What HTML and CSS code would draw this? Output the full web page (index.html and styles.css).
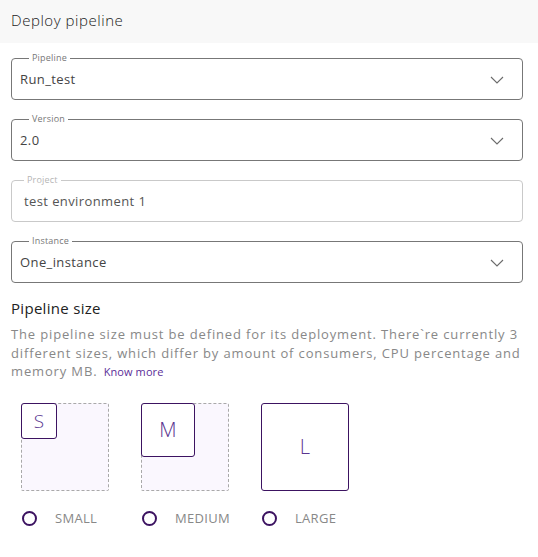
FILE: index.html
```html
<!DOCTYPE html>
<html lang="en">
<head>
<meta charset="utf-8">
<title>Deploy pipeline</title>
<link rel="stylesheet" href="styles.css">
</head>
<body>
<div class="panel">
  <header class="header">Deploy pipeline</header>
  <div class="form">
    <fieldset class="field">
      <legend class="field-label">Pipeline</legend>
      <div class="field-row">
        <span class="field-value">Run_test</span>
        <svg class="chevron" width="14" height="8" viewBox="0 0 14 8"><path d="M1 1 L7 7 L13 1" fill="none" stroke="#6b6b6b" stroke-width="1.1"/></svg>
      </div>
    </fieldset>
    <fieldset class="field">
      <legend class="field-label">Version</legend>
      <div class="field-row">
        <span class="field-value">2.0</span>
        <svg class="chevron" width="14" height="8" viewBox="0 0 14 8"><path d="M1 1 L7 7 L13 1" fill="none" stroke="#6b6b6b" stroke-width="1.1"/></svg>
      </div>
    </fieldset>
    <fieldset class="field field--disabled">
      <legend class="field-label">Project</legend>
      <div class="field-row">
        <span class="field-value">test environment 1</span>
      </div>
    </fieldset>
    <fieldset class="field">
      <legend class="field-label">Instance</legend>
      <div class="field-row">
        <span class="field-value">One_instance</span>
        <svg class="chevron" width="14" height="8" viewBox="0 0 14 8"><path d="M1 1 L7 7 L13 1" fill="none" stroke="#6b6b6b" stroke-width="1.1"/></svg>
      </div>
    </fieldset>

    <h2 class="section-title">Pipeline size</h2>
    <p class="section-text">The pipeline size must be defined for its deployment. There`re currently 3 different sizes, which differ by amount of consumers, CPU percentage and memory MB. <a class="link" href="#">Know more</a></p>

    <div class="sizes">
      <div class="size">
        <div class="size-frame">
          <div class="size-box size-box--s">S</div>
        </div>
        <label class="size-option"><span class="radio"></span><span class="size-name">SMALL</span></label>
      </div>
      <div class="size">
        <div class="size-frame">
          <div class="size-box size-box--m">M</div>
        </div>
        <label class="size-option"><span class="radio"></span><span class="size-name">MEDIUM</span></label>
      </div>
      <div class="size">
        <div class="size-frame size-frame--full">
          <div class="size-box size-box--l">L</div>
        </div>
        <label class="size-option"><span class="radio"></span><span class="size-name">LARGE</span></label>
      </div>
    </div>
  </div>
</div>
</body>
</html>
```
FILE: styles.css
```css
* { box-sizing: border-box; }
html, body { margin: 0; padding: 0; background: #fff; }
body {
  font-family: "Open Sans", "DejaVu Sans", sans-serif;
  color: #333;
}
.panel { width: 538px; }
.header {
  height: 43px;
  background: #f8f8f8;
  padding: 0 11px 4px 11px;
  display: flex;
  align-items: center;
  font-size: 15px;
  font-weight: 300;
  letter-spacing: 0.55px;
  color: #222;
}
.form {
  padding: 10px 15px 0 11px;
  display: flex;
  flex-direction: column;
}
.field {
  margin: 0 0 14px 0;
  padding: 0 18px 3px 8px;
  border: 1px solid #777;
  border-radius: 4px;
  min-width: 0;
}
.field-label {
  font-size: 9px;
  line-height: 10px;
  color: #777;
  margin-left: 9px;
  padding: 0 3px;
  letter-spacing: 0.2px;
}
.field-row {
  height: 33px;
  display: flex;
  align-items: center;
  justify-content: space-between;
  padding-bottom: 2px;
}
.field-value {
  font-size: 13px;
  color: #444;
  letter-spacing: 0.4px;
}
.chevron { display: block; margin-top: 2px; }
.field--disabled { border-color: #c9c9c9; padding-left: 12px; }
.field--disabled .field-label { color: #b5b5b5; margin-left: 0; }
.field--disabled .field-value { color: #555; }

.section-title {
  margin: 0;
  font-size: 15px;
  font-weight: 400;
  letter-spacing: 0.3px;
  color: #222;
  line-height: 22px;
}
.section-text {
  margin: 6px 0 0 0;
  font-size: 13px;
  line-height: 18.5px;
  letter-spacing: 0.85px;
  color: #888;
}
.link {
  font-size: 11px;
  letter-spacing: 0.1px;
  color: #5b2e98;
  text-decoration: none;
  margin-left: 2px;
}
.sizes {
  display: flex;
  gap: 32px;
  margin-top: 21px;
  padding-left: 10px;
}
.size { width: 88px; }
.size-frame {
  width: 88px;
  height: 88px;
  border: 1px dashed #a9a9a9;
  border-radius: 2px;
  background: #faf7fe;
  position: relative;
}
.size-frame--full { border: none; background: transparent; }
.size-box {
  position: absolute;
  top: -1px;
  left: -1px;
  background: #fff;
  border: 1.5px solid #3c1361;
  border-radius: 3px;
  display: flex;
  align-items: center;
  justify-content: center;
  color: #5a3590;
  font-weight: 300;
}
.size-box--s { width: 36px; height: 36px; font-size: 19px; }
.size-box--m { width: 54px; height: 54px; font-size: 20px; }
.size-box--l { top: 0; left: 0; width: 88px; height: 88px; font-size: 20px; }
.size-option {
  display: flex;
  align-items: center;
  margin-top: 18px;
  padding-left: 1px;
}
.radio {
  width: 15px;
  height: 15px;
  border: 2px solid #3c1361;
  border-radius: 50%;
  flex: none;
  margin-top: 2px;
}
.size-name {
  margin-left: 18px;
  font-size: 13px;
  color: #888;
  letter-spacing: 0.3px;
}
```
